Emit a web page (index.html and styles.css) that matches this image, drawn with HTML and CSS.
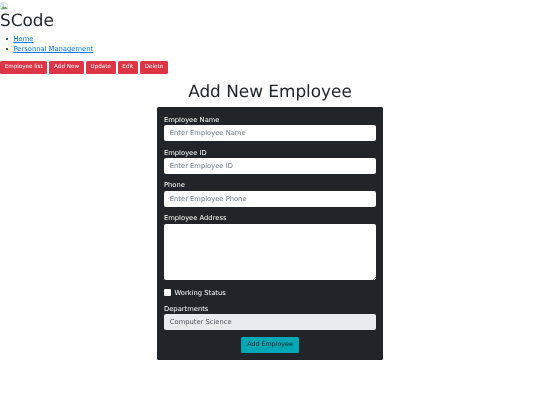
FILE: index.html
```html
<!DOCTYPE html>
<html lang="en">
<head>
<meta charset="utf-8">
<title>SCode</title>
<link rel="stylesheet" href="styles.css">
</head>
<body>
<svg class="broken" viewBox="0 0 16 16" width="8" height="8" aria-hidden="true"><path d="M1.5 1.5h9l4 4v9h-13z" fill="#fff" stroke="#a9b0b8"/><path d="M2 14l4-6 3 3 2-2 3 3v2z" fill="#6fa86b"/><path d="M3 3h5v4H3z" fill="#bcd3f2"/></svg>
<h2 class="brand">SCode</h2>
<ul class="links">
<li><a href="#">Home</a></li>
<li><a href="#">Personnal Management</a></li>
</ul>
<div class="actions">
<button class="btn-red">Employee list</button>
<button class="btn-red">Add New</button>
<button class="btn-red">Update</button>
<button class="btn-red">Edit</button>
<button class="btn-red">Delete</button>
</div>
<h1 class="title">Add New Employee</h1>
<form class="card">
<div class="group"><label>Employee Name</label><input class="control" placeholder="Enter Employee Name"></div>
<div class="group"><label>Employee ID</label><input class="control" placeholder="Enter Employee ID"></div>
<div class="group"><label>Phone</label><input class="control" placeholder="Enter Employee Phone"></div>
<div class="group group-area"><label>Employee Address</label><textarea class="control area"></textarea></div>
<div class="check"><input type="checkbox" class="box"><span>Working Status</span></div>
<div class="group group-last"><label>Departments</label><input class="control readonly" value="Computer Science" readonly></div>
<div class="submit"><button type="button" class="btn-teal">Add Employee</button></div>
</form>
</body>
</html>
```
FILE: styles.css
```css
* { box-sizing: border-box; }
body { margin: 0; font-family: "DejaVu Sans", sans-serif; font-size: 6.75px; line-height: 1.5; color: #212529; background: #fff; text-rendering: geometricPrecision; will-change: transform; }
.broken { display: block; margin-top: 1.6px; }
.brand { margin: 0 0 4.2px; font-size: 16.875px; line-height: 1.2; font-weight: 400; }
.links { margin: 0 0 6.75px; padding: 0 0 0 6px; list-style: none; }
.links li { display: flex; align-items: center; gap: 5.5px; }
.links li::before { content: ""; width: 2px; height: 2px; border-radius: 50%; background: #212529; }
.links a { color: #007bff; text-decoration: underline; }
.actions { display: flex; gap: 2.1px; }
.btn-red { height: 13.2px; padding: 0 4.7px; border: 0; border-radius: 1.6px; background: #dc3545; color: #fff; font: 5.63px/1.5 "DejaVu Sans", sans-serif; text-rendering: geometricPrecision; }
.title { margin: 6.4px 0; text-align: center; font-size: 16.875px; line-height: 1.2; font-weight: 400; }
.card { width: 226px; margin: 0 auto; padding: 7.5px 7px 6.5px; background: #212529; color: #fff; border-radius: 1.6px; }
.group { margin-bottom: 6.45px; }
.group-area { margin-bottom: 7.5px; }
.group-last { margin-bottom: 6.6px; }
.group label { display: block; margin-bottom: 0.4px; }
.control { display: block; width: 100%; height: 15.8px; padding: 0 5.8px; border: 0; border-radius: 2.1px; background: #fff; font: 6.75px/1.5 "DejaVu Sans", sans-serif; color: #495057; text-rendering: geometricPrecision; }
.control::placeholder { color: #6c757d; }
.area { height: 56.5px; padding: 3px 5.8px; resize: none; background: linear-gradient(135deg, transparent 0 60%, #9aa0a6 60% 70%, transparent 70% 80%, #9aa0a6 80% 90%, transparent 90%) right 0.5px bottom 0.5px / 4px 4px no-repeat #fff; }
.readonly { background: #e9ecef; }
.check { display: flex; align-items: center; gap: 3.6px; margin-bottom: 6px; }
.box { appearance: none; width: 7px; height: 7px; margin: 0; background: #fff; border-radius: 1.3px; }
.submit { display: flex; justify-content: center; }
.btn-teal { height: 16.8px; padding: 0 5.85px; border: 0; border-radius: 1.6px; background: #00a8b5; color: #212529; font: 6.33px/1.5 "DejaVu Sans", sans-serif; text-rendering: geometricPrecision; }
```
